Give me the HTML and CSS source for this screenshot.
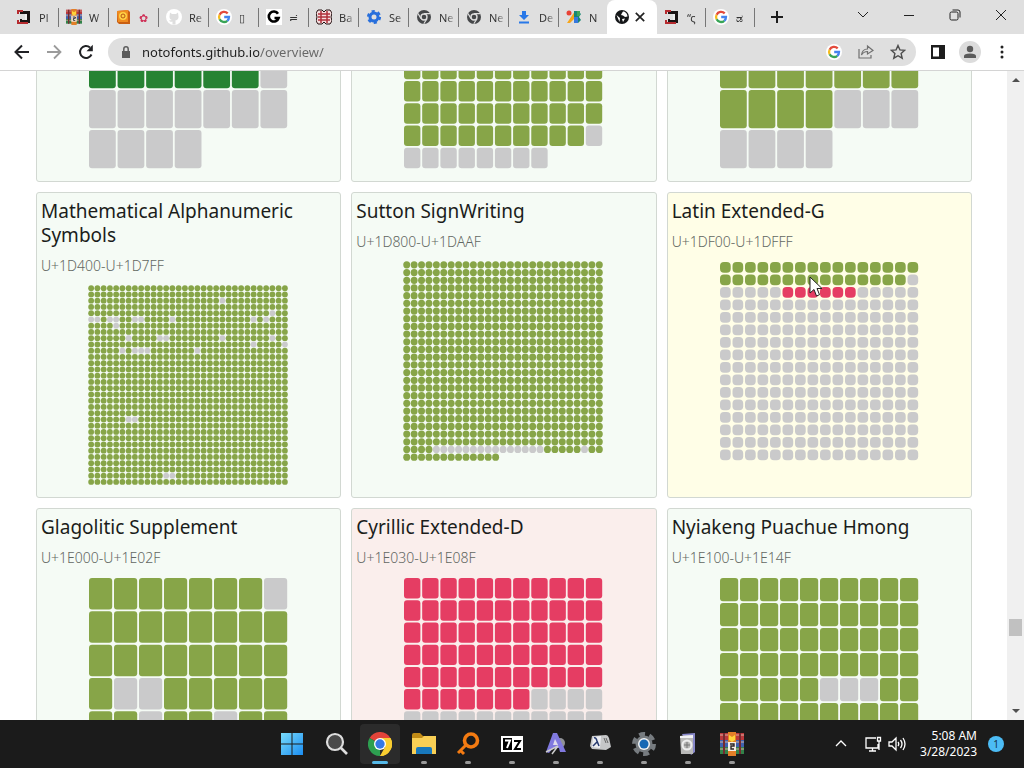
FILE: index.html
```html
<!DOCTYPE html>
<html lang="en">
<head>
<meta charset="utf-8">
<title>Noto Overview</title>
<link rel="stylesheet" href="styles.css">
</head>
<body>
<svg class="defs" aria-hidden="true">
  <symbol id="google" viewBox="0 0 16 16">
    <circle cx="8" cy="8" r="8" fill="#fff"/>
    <g fill="none" stroke-width="2.3">
      <path d="M11.7 4.4A5 5 0 0 0 3.6 5.7" stroke="#e34a3b"/>
      <path d="M3.6 5.7a5 5 0 0 0 0 4.6" stroke="#f5bc1f"/>
      <path d="M3.6 10.3a5 5 0 0 0 7.7 1.5" stroke="#38a456"/>
      <path d="M11.3 11.8A5 5 0 0 0 13 8H8.2" stroke="#4483ee"/>
    </g>
  </symbol>
  <symbol id="chrome-grey" viewBox="0 0 16 16">
    <circle cx="8" cy="8" r="7" fill="#454749"/>
    <circle cx="8" cy="8" r="3" fill="#454749" stroke="#ddd" stroke-width="1.4"/>
    <path d="M8 4.6h6.2M5 9.6 2 4.5M11 9.7l-3.2 5.1" stroke="#ddd" stroke-width="1.2"/>
  </symbol>
  <symbol id="scroll-d" viewBox="0 0 16 16">
    <path d="M4 2h10v12H4v-4h2v1h3V5H4z" fill="#191414"/>
    <path d="M9 5h2v6H9z" fill="#eee"/>
    <path d="M1 1h6v2H3v2H1zM1 11h2v2h9v2H1z" fill="#b52a2e"/>
  </symbol>
  <symbol id="books" viewBox="0 0 24 24">
    <path d="M0 1h24v7H0z" fill="#b9383c"/>
    <path d="M0 8h24v7H0z" fill="#3f61ae"/>
    <path d="M0 15h24v7H0z" fill="#328249"/>
    <path d="M0 3h24M0 10h24M0 17h24" stroke="#d7b1a0" stroke-width="1"/>
    <path d="M4 1v21M20 1v21" stroke="#752b30" stroke-width="2"/>
    <path d="M8 0h8v24H8z" fill="#e27f28"/>
    <path d="m9 3 3 2 3-2v5l-3 2-3-2z" fill="#ffd43b"/>
    <path d="M8 10h8v9H8z" fill="#f5eee7"/>
    <path d="M10 12h4v2h-3v3h3" fill="none" stroke="#2b2524" stroke-width="1.4"/>
  </symbol>
</svg>

<header class="browser">
  <div class="tabstrip">
    <nav class="tabs" aria-label="Tabs">
      <button class="tab"><svg><use href="#scroll-d"/></svg><span>Pl</span></button>
      <button class="tab"><svg><use href="#books"/></svg><span>W</span></button>
      <button class="tab"><svg viewBox="0 0 16 16"><path d="m1 2 11-1 2 2v12H3l-2-2z" fill="#c95f12"/><path d="m1 2 11-1v12H2z" fill="#ef8b20"/><circle cx="7" cy="7" r="4" fill="#ffd043"/><circle cx="7" cy="7" r="2" fill="none" stroke="#b85514"/></svg><span class="rose">&#10047;</span></button>
      <button class="tab"><svg viewBox="0 0 16 16"><circle cx="8" cy="8" r="8" fill="#fff"/><path d="M4 3.5 6 5h4l2-1.500.5 4c.3 3-2 3.700-3 4v4h-3v-3c-2 .8-3-.3-3.500-1l3-.5C4 10.500 3.500 9.500 3.500 7.500z" fill="#dedede"/></svg><span>Re</span></button>
      <button class="tab"><svg><use href="#google"/></svg><span>&#9647;</span></button>
      <button class="tab"><svg viewBox="0 0 16 16"><path d="M0 0h16v16H0z" fill="#fff"/><path d="M12 4.800A5 5 0 1 0 12.600 9H8.500" fill="none" stroke="#000" stroke-width="2.600"/></svg><span>&#8787;</span></button>
      <button class="tab"><svg viewBox="0 0 16 16"><path d="M2 1h4l2 2 2-2h4l2 3-1 4 1 4-2 3h-4l-2-2-2 2H2l-2-3 1-4-1-4z" fill="#f6dcdd" stroke="#241011"/><path d="M5 2v12M11 2v12M2 5h12M2 8h12M2 11h12" stroke="#b0303b" stroke-width="1.500"/></svg><span>Ba</span></button>
      <button class="tab"><svg viewBox="0 0 16 16"><circle cx="8" cy="8" r="4" fill="none" stroke="#286fdc" stroke-width="3"/><circle cx="8" cy="8" r="6" fill="none" stroke="#286fdc" stroke-width="2.200" stroke-dasharray="3.140 3.140"/></svg><span>Se</span></button>
      <button class="tab"><svg><use href="#chrome-grey"/></svg><span>Ne</span></button>
      <button class="tab"><svg><use href="#chrome-grey"/></svg><span>Ne</span></button>
      <button class="tab"><svg viewBox="0 0 16 16"><path d="M6 2h4v4h3l-5 5-5-5h3zM3 12.500h10v2H3z" fill="#2878e8"/></svg><span>De</span></button>
      <button class="tab last"><svg viewBox="0 0 16 16"><circle cx="3" cy="4" r="2.500" fill="#e94235"/><path d="m5 8 4-6v7l-5 5H1z" fill="#f7a61b"/><path d="M8 2h4l3 3-2 3 2 3-3 3H8z" fill="#168775"/><path d="M8 8h4v6H8z" fill="#3779df"/><path d="M11 2h3v5h-3z" fill="#40a65b"/></svg><span>N</span></button>
      <button class="tab active" aria-label="Noto overview, close"><svg viewBox="0 0 16 16"><circle cx="8" cy="8" r="7" fill="#151719"/><path d="M9 2.500c2 0 4.500 2 4.500 5L11 8 9 6.500 7 6l1-2zM2.500 6 6 9l-.5 4M8 10l3-.5L9 13z" fill="#fff"/></svg><svg class="close" viewBox="0 0 10 10"><path d="m1.500 1.500 7 7m0-7-7 7" stroke="#222" stroke-width="1.400"/></svg></button>
      <button class="tab"><svg><use href="#scroll-d"/></svg><span>&#8220;&#962;</span></button>
      <button class="tab"><svg><use href="#google"/></svg><span>&#3233;</span></button>
      <button class="newtab" aria-label="New tab"><svg viewBox="0 0 14 14"><path d="M7 1v12M1 7h12" stroke="#1d1d1d" stroke-width="2"/></svg></button>
    </nav>
    <div class="window-buttons">
      <button aria-label="Search tabs"><svg viewBox="0 0 12 12"><path d="m1 3 5 5 5-5"/></svg></button>
      <button aria-label="Minimize"><svg viewBox="0 0 12 12"><path d="M1 6.500h10"/></svg></button>
      <button aria-label="Restore"><svg viewBox="0 0 12 12"><rect x="1" y="3" width="8" height="8" rx="1.500"/><path d="M3.500 1H9q2 0 2 2v5.500"/></svg></button>
      <button aria-label="Close"><svg viewBox="0 0 12 12"><path d="m1 1 10 10m0-10L1 11"/></svg></button>
    </div>
  </div>
  <div class="toolbar">
    <div class="nav-buttons">
      <button aria-label="Back"><svg viewBox="0 0 16 16"><path d="M15 8H2m6-6.500L1.500 8 8 14.500" fill="none" stroke="#202124" stroke-width="2"/></svg></button>
      <button aria-label="Forward"><svg viewBox="0 0 16 16"><path d="M1 8h13M8 1.500 14.500 8 8 14.500" fill="none" stroke="#9b9b9b" stroke-width="1.800"/></svg></button>
      <button aria-label="Reload"><svg viewBox="0 0 16 16"><path d="M13.500 10.500A6 6 0 1 1 12 3.500" fill="none" stroke="#202124" stroke-width="2"/><path d="M14.800.8v6.400H8.500z" fill="#202124"/></svg></button>
    </div>
    <div class="address">
      <svg class="lock" viewBox="0 0 10 14"><path d="M1 6h8v7H1z" fill="#5b5b5b"/><path d="M2.800 6V4a2.200 2.200 0 0 1 4.400 0v2" fill="none" stroke="#5b5b5b" stroke-width="1.500"/></svg>
      <input class="url" aria-label="Address" value="notofonts.github.io/overview/">
      <button aria-label="Search with Google"><svg><use href="#google"/></svg></button>
      <button aria-label="Share"><svg viewBox="0 0 16 16" fill="none" stroke="#707070" stroke-width="1.200"><path d="M1 5v9h12v-3M3.500 11c.5-4 3-6 6-6V2L15 6.500 9.500 10V7.500c-2.500 0-4.500 1-6 3.500z"/></svg></button>
      <button aria-label="Bookmark"><svg viewBox="0 0 16 16"><path d="m8 1.500 1.900 4.400 4.800.4-3.600 3.200 1.100 4.700L8 11.700l-4.200 2.500 1.100-4.700-3.600-3.200 4.800-.4z" fill="none" stroke="#4d4d4d" stroke-width="1.400"/></svg></button>
    </div>
    <div class="tools">
      <button aria-label="Side panel"><svg viewBox="0 0 16 16"><path d="M1 1h14v14H1z" fill="#1d1d1d"/><path d="M3 3.500h6v9H3z" fill="#fff"/></svg></button>
      <button class="profile" aria-label="Profile"><svg viewBox="0 0 16 16"><circle cx="8" cy="5" r="3.200" fill="#5b5b5b"/><path d="M2 14v-2q0-2.500 6-2.500t6 2.500v2z" fill="#5b5b5b"/></svg></button>
      <button aria-label="Menu"><svg viewBox="0 0 16 16" fill="#222"><circle cx="8" cy="3" r="1.500"/><circle cx="8" cy="8" r="1.500"/><circle cx="8" cy="13" r="1.500"/></svg></button>
    </div>
  </div>
</header>

<main class="viewport">
  <div class="page">
    <div class="blocks">
      <article class="card ok bottom"><svg class="chart" data-cols="7" data-rows="5" data-runs="20d12x"></svg></article>
      <article class="card ok bottom"><svg class="chart" data-cols="11" data-rows="9" data-runs="87g9x"></svg></article>
      <article class="card ok bottom"><svg class="chart" data-cols="7" data-rows="5" data-runs="25g7x"></svg></article>

      <article class="card ok"><h2>Mathematical Alphanumeric Symbols</h2><p>U+1D400-U+1D7FF</p><svg class="chart" data-cols="32" data-rows="32" data-runs="85g1x71g1x2g2x1g2x2g2x4g1x12g1x1g1x7g1x65g1x4g2x8g1x7g1x28g1x4g1x5g1x1g3x7g1x340g2x292g2x50g"></svg></article>
      <article class="card ok"><h2>Sutton SignWriting</h2><p>U+1D800-U+1DAAF</p><svg class="chart" data-cols="27" data-rows="26" data-runs="652g15x5g1x15g"></svg></article>
      <article class="card partial"><h2>Latin Extended-G</h2><p>U+1DF00-U+1DFFF</p><svg class="chart" data-cols="16" data-rows="16" data-runs="31g6x6r213x"></svg></article>

      <article class="card ok"><h2>Glagolitic Supplement</h2><p>U+1E000-U+1E02F</p><svg class="chart" data-cols="8" data-rows="6" data-runs="7g1x17g2x7g1x2g1x5g5x"></svg></article>
      <article class="card missing"><h2>Cyrillic Extended-D</h2><p>U+1E030-U+1E08F</p><svg class="chart" data-cols="11" data-rows="9" data-runs="62r34x"></svg></article>
      <article class="card ok"><h2>Nyiakeng Puachue Hmong</h2><p>U+1E100-U+1E14F</p><svg class="chart" data-cols="10" data-rows="8" data-runs="45g3x32g"></svg></article>
    </div>
  </div>
  <div class="scrollbar">
    <button aria-label="Scroll up"><svg viewBox="0 0 8 8"><path d="M0 6h8L4 2z" fill="#505050"/></svg></button>
    <div class="track"><div class="thumb"></div></div>
    <button aria-label="Scroll down"><svg viewBox="0 0 8 8"><path d="M0 2h8L4 6z" fill="#505050"/></svg></button>
  </div>
  <svg class="pointer" viewBox="0 0 14 22"><path d="M1 1v16l4-3.500L7.500 20l3-1.300L8 12.500h5z" fill="#fff" stroke="#222"/></svg>
</main>

<footer class="taskbar">
  <div class="apps">
    <button aria-label="Start"><svg viewBox="0 0 24 24"><defs><linearGradient id="win" x2="1" y2="1"><stop stop-color="#79dcfb"/><stop offset="1" stop-color="#1b8df2"/></linearGradient></defs><path d="M1 1h10.500v10.500H1zM12.500 1H23v10.500H12.500zM1 12.500h10.500V23H1zM12.500 12.500H23V23H12.500z" fill="url(#win)"/></svg></button>
    <button aria-label="Search"><svg viewBox="0 0 24 24"><circle cx="11" cy="10" r="8" fill="#4a4a4a" stroke="#dedede" stroke-width="2.200"/><path d="m17 16 6 6" stroke="#dedede" stroke-width="2.600"/></svg></button>
    <button class="current" aria-label="Chrome"><svg viewBox="0 0 24 24"><path d="M12 12 1.600 6A12 12 0 0 1 22.400 6z" fill="#e3443a"/><path d="M12 12 1.600 6A12 12 0 0 0 12 24z" fill="#2d9f50"/><path d="M12 12h10.400L12 24A12 12 0 0 0 22.400 6H12z" fill="#f9cd30"/><path d="M12 24A12 12 0 0 0 22.400 6H12v6l5 3z" fill="#f9cd30"/><circle cx="12" cy="12" r="6" fill="#fff"/><circle cx="12" cy="12" r="4.700" fill="#3478e5"/></svg></button>
    <button class="open" aria-label="File Explorer"><svg viewBox="0 0 24 24"><path d="M0 3q0-2 2-2h6l3 3h11v5H0z" fill="#c18b16"/><path d="M0 6h10l2-2h12v18H0z" fill="#f8cf55"/><path d="M4 17q0-2 2-2h12q2 0 2 2v5H4z" fill="#1878bc"/></svg></button>
    <button class="open" aria-label="Search tool"><svg viewBox="0 0 24 24"><circle cx="15" cy="8.500" r="6.500" fill="none" stroke="#f47b12" stroke-width="3.600"/><path d="m10 13-8 8m2-3 4 4" stroke="#f47b12" stroke-width="3"/></svg></button>
    <button class="open" aria-label="7-Zip"><svg viewBox="0 0 24 24"><path d="M1 4h22v16H1z" fill="#fff"/><path d="M3 6h9v12H3z" fill="#000"/><path d="M5 8.500h5L7 16" fill="none" stroke="#fff" stroke-width="2"/><path d="M14 9h6l-5 8h6" fill="none" stroke="#000" stroke-width="2"/></svg></button>
    <button class="open" aria-label="Font editor"><svg viewBox="0 0 24 24"><circle cx="16" cy="11" r="5" fill="#909296"/><path d="M9 1h4l9 19h-6l-1-4H9l-4 5-3-1z" fill="#8079df"/><path d="m11 7 3 6h-5z" fill="#dfdced"/><path d="m2 20 12-6-6 8" fill="none" stroke="#ccc" stroke-width="1.500"/></svg></button>
    <button class="open" aria-label="Lambda keyboard"><svg viewBox="0 0 24 24"><path d="m4 4 14-1q2 0 3 3l2 9-5 3-14-1-2-3z" fill="#c5c6c8"/><path d="m5 5 8-1-1 12-8-1z" fill="#eceef2"/><path d="M6 6q2-1 3 3l2 5m-2-4-4 4" fill="none" stroke="#25386e" stroke-width="1.500"/><path d="m16 6 2 5m0-5 2 5" stroke="#666"/></svg></button>
    <button class="open" aria-label="Settings"><svg viewBox="0 0 24 24"><circle cx="12" cy="12" r="8.500" fill="#777c80"/><circle cx="12" cy="12" r="10" fill="none" stroke="#777c80" stroke-width="4" stroke-dasharray="6 4.470"/><circle cx="12" cy="12" r="6" fill="#f0f1f2"/><circle cx="12" cy="12" r="4.500" fill="#1768b4"/></svg></button>
    <button class="open" aria-label="Character files"><svg viewBox="0 0 24 24"><path d="m6 2 13-1v19l-4 3z" fill="#8888c9"/><path d="m4 4 13-1v19H5z" fill="#b9b9b8"/><path d="m4 4 13-1v3H4z" fill="#f2f2f4"/><circle cx="11" cy="13" r="4.500" fill="none" stroke="#eee" stroke-width="2"/><path d="M11 10v6m-3-3h6" stroke="#777"/></svg></button>
    <button class="open" aria-label="WinRAR"><svg><use href="#books"/></svg></button>
  </div>
  <div class="tray">
    <button aria-label="Hidden icons"><svg viewBox="0 0 18 18"><path d="m4 11 5-5 5 5"/></svg></button>
    <button class="status" aria-label="Network and sound"><svg viewBox="0 0 18 18"><path d="M12 3H2v10h12V9M5 16h7M8.500 13v3M13.500 2.500h3V6h-3zM15 6v9"/></svg><svg viewBox="0 0 18 18"><path d="M1 7v4h3l4 4V3L4 7zM10 7q1.500 2 0 4M12.500 5q3 4 0 8M15 3q4 6 0 12"/></svg></button>
    <button class="clock"><time>5:08 AM<br>3/28/2023</time></button>
    <button class="badge" aria-label="1 notification">1</button>
  </div>
</footer>
<script src="charts.js"></script>
</body>
</html>
```
FILE: styles.css
```css
* { box-sizing: border-box; }
body {
  margin: 0;
  height: 100vh;
  display: flex;
  flex-direction: column;
  overflow: hidden;
  background: #fff;
  font-family: "Noto Sans", "Open Sans", sans-serif;
}
button {
  border: 0;
  padding: 0;
  background: none;
  font: inherit;
  color: inherit;
  display: flex;
  align-items: center;
  justify-content: center;
}
svg { display: block; flex: none; width: 16px; height: 16px; }
.defs { position: absolute; width: 0; height: 0; }

.browser { flex: none; border-bottom: 1px solid #d4d4d4; }
.tabstrip { height: 34px; display: flex; background: #dfdfdf; }
.tabs { flex: 1; display: flex; padding-left: 9px; }
.tab {
  width: 50px;
  height: 34px;
  padding-left: 7px;
  gap: 7px;
  justify-content: flex-start;
  font-size: 11px;
  color: #333;
  background: linear-gradient(#777, #777) right center / 1px 19px no-repeat;
}
.tab span {
  width: 17px;
  white-space: nowrap;
  text-align: left;
  -webkit-mask-image: linear-gradient(to right, #000 40%, transparent);
}
.tab .rose { color: #cf3158; }
.tab.last { width: 48px; background: none; }
.tab.active { width: 50px; background: #fff; border-radius: 8px 8px 0 0; gap: 4px; }
.tab.active ~ .tab { width: 49px; }
.tab .close { width: 12px; height: 12px; }
.newtab { width: 44px; }
.newtab svg { width: 14px; height: 14px; }
.window-buttons { display: flex; height: 29px; }
.window-buttons button { width: 46px; }
.window-buttons svg { width: 12px; height: 12px; fill: none; stroke: #222; stroke-width: 1; }

.toolbar { height: 36px; display: flex; align-items: center; padding: 0 11px 0 6px; background: #fff; }
.nav-buttons { display: flex; width: 102px; }
.nav-buttons button { width: 32px; height: 32px; }
.address {
  flex: 1;
  height: 28px;
  display: flex;
  align-items: center;
  border-radius: 14px;
  background: #dfdfdf;
  padding: 0 2px 0 13px;
}
.address button { width: 32px; height: 28px; }
.lock { width: 10px; height: 14px; margin-right: 11px; }
.url {
  flex: 1;
  min-width: 0;
  border: 0;
  padding: 0;
  outline: 0;
  font: 13px/20px "Noto Sans", sans-serif;
  color: #333;
  background: linear-gradient(to right, #1f1f1f 117px, #666 117px);
  -webkit-background-clip: text;
  background-clip: text;
  -webkit-text-fill-color: transparent;
}
.tools { display: flex; gap: 10px; padding-left: 11px; }
.tools button { width: 22px; height: 22px; }
.profile { border-radius: 50%; background: #dcdcdc; }

.viewport { flex: 1; min-height: 0; display: flex; overflow: hidden; position: relative; }
.page { flex: 1; overflow: hidden; padding: 0 35px 0 36px; }
.blocks {
  display: grid;
  grid-template-columns: repeat(3, 1fr);
  gap: 10px;
  margin-top: -195px;
}
.card {
  height: 306px;
  padding: 6px 5px 12px 4px;
  border: 1px solid #d2d8d2;
  border-radius: 3px;
  display: flex;
  flex-direction: column;
}
.bottom { justify-content: flex-end; }
.ok { background: #f5fbf5; }
.partial { background: #fffee7; }
.missing { background: #faeeec; }
.card h2 { margin: 0; font-size: 19px; line-height: 24px; font-weight: 400; color: #1b1d1b; }
.card p { margin: 8px 0; font-size: 14px; line-height: 22px; font-weight: 300; color: #626762; }
.chart { width: 200px; height: 200px; align-self: center; }
.g { fill: #87a548; }
.d { fill: #278333; }
.r { fill: #e53d63; }
.x { fill: #cacacb; }

.scrollbar { width: 17px; display: flex; flex-direction: column; background: #f0f0f0; }
.scrollbar button { height: 18px; width: 17px; }
.scrollbar svg { width: 8px; height: 8px; }
.track { flex: 1; padding: 0 2px; display: flex; flex-direction: column; justify-content: flex-end; }
.thumb { height: 17px; margin-bottom: 66px; background: #c1c1c1; }
.pointer { position: absolute; left: 809px; top: 205px; width: 14px; height: 22px; }

.taskbar {
  flex: none;
  height: 48px;
  display: flex;
  align-items: center;
  padding-left: 272px;
  background: #1b1b1b;
  color: #fff;
}
.apps { display: flex; gap: 4px; flex: 1; }
.apps button { width: 40px; height: 40px; flex: none; position: relative; border-radius: 4px; }
.apps svg { width: 24px; height: 24px; }
.apps .current { background: #2b2b2b; }
.open::after, .current::after {
  content: "";
  position: absolute;
  bottom: 0;
  width: 6px;
  height: 3px;
  border-radius: 2px;
  background: #999;
}
.current::after { width: 16px; background: #55b9e8; }
.tray { display: flex; align-items: center; padding-right: 20px; }
.tray svg { width: 18px; height: 18px; fill: none; stroke: #fff; stroke-width: 1.3; }
.status { gap: 6px; margin-left: 14px; }
.clock { margin: 0 11px 0 14px; font-size: 12px; line-height: 16px; text-align: right; }
.badge { width: 16px; height: 16px; border-radius: 50%; background: #4cbcf5; color: #123449; font-size: 10px; }
```
FILE: charts.js
```js
// Each chart is run-length encoded: a count followed by a coverage class.
const NS = "http://www.w3.org/2000/svg";
const SIZE = 200;
const GAP = 1;

for (const chart of document.querySelectorAll(".chart")) {
  const cols = Number(chart.dataset.cols);
  const rows = Number(chart.dataset.rows);
  const w = SIZE / cols;
  const h = SIZE / rows;
  const gap = w < 10 ? GAP / 4 : GAP;
  chart.setAttribute("viewBox", `0 0 ${SIZE} ${SIZE}`);
  let index = 0;
  for (const [, count, kind] of chart.dataset.runs.matchAll(/(\d+)([a-z])/g)) {
    for (let i = 0; i < Number(count); i++, index++) {
      const cell = document.createElementNS(NS, "rect");
      cell.setAttribute("class", kind);
      cell.setAttribute("x", (index % cols) * w + gap);
      cell.setAttribute("y", Math.floor(index / cols) * h + gap);
      cell.setAttribute("width", w - gap * 1.8);
      cell.setAttribute("height", h - gap * 1.8);
      cell.setAttribute("rx", w < 15 ? 4 : 3);
      chart.append(cell);
    }
  }
}
```
